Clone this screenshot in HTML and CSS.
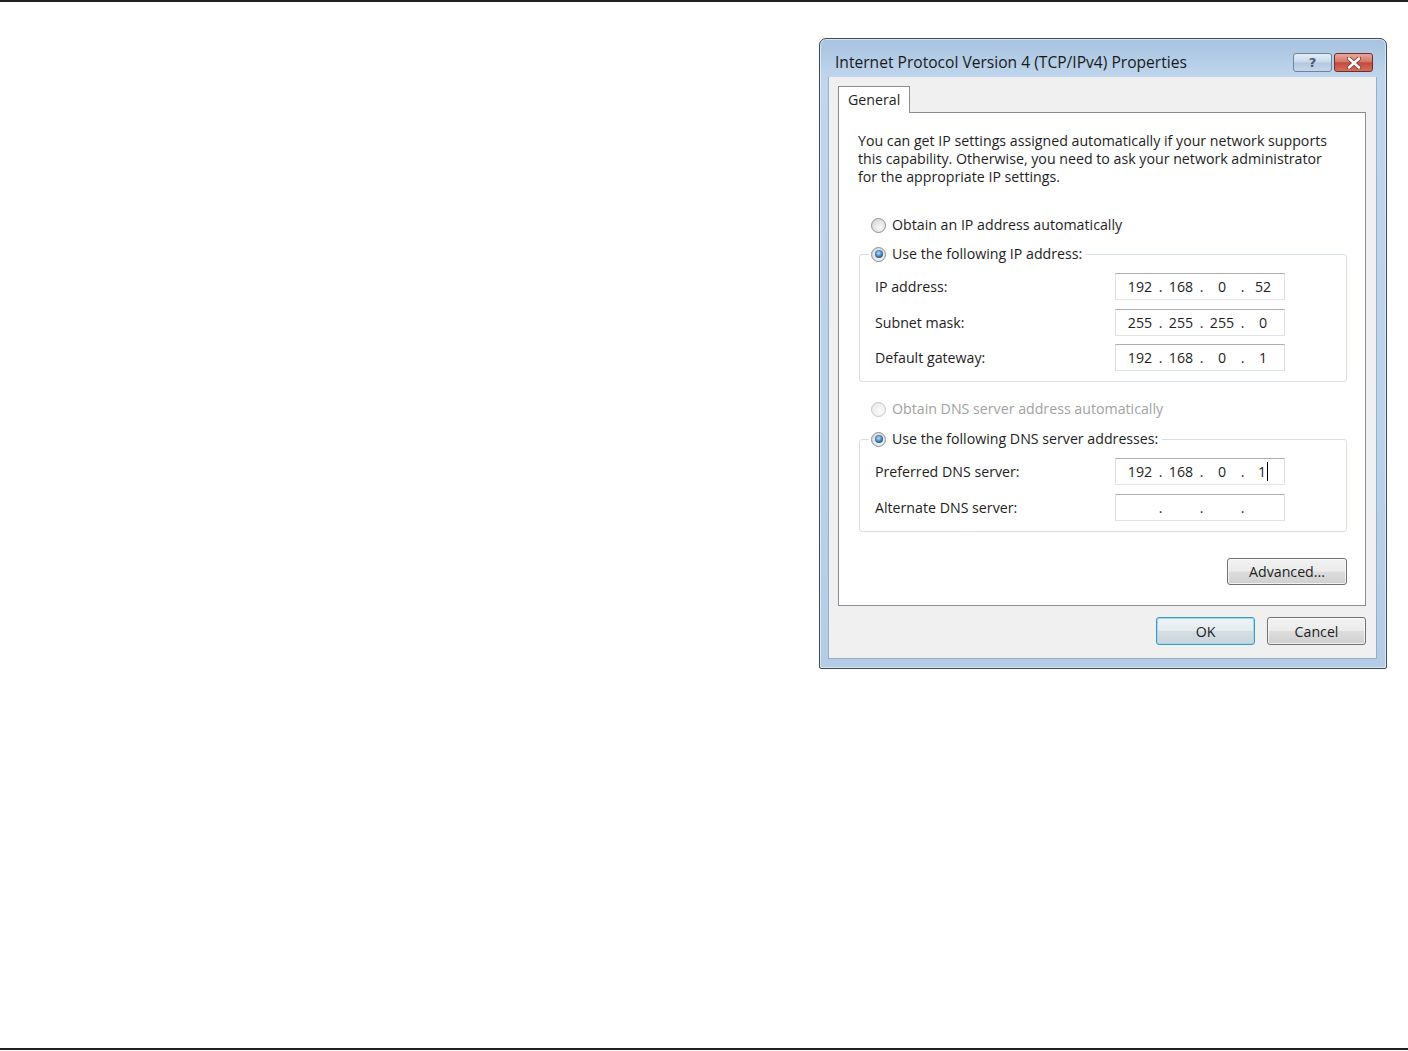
FILE: index.html
```html
<!DOCTYPE html>
<html lang="en">
<head>
    <meta charset="UTF-8">
    <title>Internet Protocol Version 4 (TCP/IPv4) Properties</title>
    <link rel="stylesheet" href="styles.css">
</head>
<body>
<div class="page">
    <div class="rule"></div>

    <div class="canvas">
        <!-- Dialog window -->
        <div class="dialog">
            <div class="titlebar">
                <span class="title">Internet Protocol Version 4 (TCP/IPv4) Properties</span>
                <div class="caption-btns">
                    <button class="cap help">?</button>
                    <button class="cap close">
                        <svg width="16" height="12" viewBox="0 0 16 12">
                            <path d="M3 1.5 L13 10.5 M13 1.5 L3 10.5" stroke="#7a3530" stroke-width="4.2" stroke-linecap="round"/>
                            <path d="M3 1.5 L13 10.5 M13 1.5 L3 10.5" stroke="#ffffff" stroke-width="2.6" stroke-linecap="round"/>
                        </svg>
                    </button>
                </div>
            </div>

            <div class="body">
                <div class="tabs"><span class="tab">General</span></div>

                <div class="panel">
                    <p class="intro">You can get IP settings assigned automatically if your network supports<br>this capability. Otherwise, you need to ask your network administrator<br>for the appropriate IP settings.</p>

                    <div class="opt first"><span class="radio"></span>Obtain an IP address automatically</div>
                    <fieldset class="group">
                        <legend><span class="opt"><span class="radio on"></span>Use the following IP address:</span></legend>
                        <div class="row">
                            <span class="lbl">IP address:</span>
                            <div class="ip"><span class="oct">192</span><span class="dot">.</span><span class="oct">168</span><span class="dot">.</span><span class="oct">0</span><span class="dot">.</span><span class="oct">52</span></div>
                        </div>
                        <div class="row">
                            <span class="lbl">Subnet mask:</span>
                            <div class="ip"><span class="oct">255</span><span class="dot">.</span><span class="oct">255</span><span class="dot">.</span><span class="oct">255</span><span class="dot">.</span><span class="oct">0</span></div>
                        </div>
                        <div class="row">
                            <span class="lbl">Default gateway:</span>
                            <div class="ip"><span class="oct">192</span><span class="dot">.</span><span class="oct">168</span><span class="dot">.</span><span class="oct">0</span><span class="dot">.</span><span class="oct">1</span></div>
                        </div>
                    </fieldset>

                    <div class="opt second disabled"><span class="radio"></span>Obtain DNS server address automatically</div>
                    <fieldset class="group dns">
                        <legend><span class="opt"><span class="radio on"></span>Use the following DNS server addresses:</span></legend>
                        <div class="row">
                            <span class="lbl">Preferred DNS server:</span>
                            <div class="ip"><span class="oct">192</span><span class="dot">.</span><span class="oct">168</span><span class="dot">.</span><span class="oct">0</span><span class="dot">.</span><span class="oct"><span class="caret">1</span></span></div>
                        </div>
                        <div class="row">
                            <span class="lbl">Alternate DNS server:</span>
                            <div class="ip"><span class="oct"></span><span class="dot">.</span><span class="oct"></span><span class="dot">.</span><span class="oct"></span><span class="dot">.</span><span class="oct"></span></div>
                        </div>
                    </fieldset>

                    <div class="adv-row"><button class="btn adv">Advanced...</button></div>
                </div>

                <div class="footer">
                    <button class="btn ok">OK</button>
                    <button class="btn">Cancel</button>
                </div>
            </div>
        </div>
    </div>

    <div class="rule bottom"></div>
</div>
</body>
</html>
```

FILE: styles.css
```css
* {
    margin: 0;
    padding: 0;
    box-sizing: border-box;
}

body {
    background: #ffffff;
    font-family: "Open Sans", "Noto Sans", sans-serif;
    font-size: 14.2px;
    color: #1e1e1e;
}

.page {
    height: 1051px;
    display: flex;
    flex-direction: column;
}

.rule {
    height: 2px;
    background: #231f20;
}

.rule.bottom {
    margin-bottom: 1px;
}

.canvas {
    flex: 1;
}

/* Window frame */
.dialog {
    width: 568px;
    height: 631px;
    margin: 36px 0 0 819px;
    border: 1px solid #3f4a55;
    border-radius: 7px 7px 2px 2px;
    background: linear-gradient(180deg, #a7c3e1 0%, #bfd5ec 6%, #bad2ea 60%, #b4cde7 100%);
    box-shadow: inset 0 0 0 1px rgba(255, 255, 255, 0.55);
    display: flex;
    flex-direction: column;
}

.titlebar {
    height: 38px;
    display: flex;
    justify-content: space-between;
    align-items: flex-start;
    padding: 0 13px 0 15px;
}

.title {
    margin-top: 13px;
    line-height: 20px;
    font-size: 15.6px;
    color: #1a1a1a;
}

.caption-btns {
    display: flex;
    gap: 2px;
    margin-top: 14px;
}

.cap {
    width: 39px;
    height: 19px;
    border-radius: 3px;
    display: flex;
    align-items: center;
    justify-content: center;
    font-family: "DejaVu Sans", sans-serif;
}

.help {
    border: 1px solid #6f839c;
    background: linear-gradient(180deg, #e4edf7 0%, #c8d8ea 48%, #b3c8df 52%, #c4d6ea 100%);
    color: #4a5a6e;
    font-size: 13px;
    font-weight: bold;
}

.close {
    border: 1px solid #6e2f2a;
    background: linear-gradient(180deg, #e9a89c 0%, #d6776a 45%, #c24b3c 52%, #d4705f 100%);
}

/* Client area */
.body {
    flex: 1;
    margin: 0 9px 9px 8px;
    background: #f0f0f0;
    border: 1px solid #97aec6;
    border-top: none;
    padding: 9px 10px 0 9px;
}

.tabs {
    display: flex;
}

.tab {
    position: relative;
    z-index: 1;
    height: 27px;
    margin-bottom: -1px;
    padding: 3px 9px 0 9px;
    border: 1px solid #898c95;
    border-bottom: none;
    background: #ffffff;
    line-height: 20px;
}

.panel {
    height: 494px;
    border: 1px solid #898c95;
    background: #ffffff;
    padding: 19px 17px 0 19px;
}

.intro {
    line-height: 18px;
}

.opt {
    display: flex;
    align-items: center;
    gap: 6px;
    line-height: 18px;
}

.opt.first {
    margin: 30px 0 0 13px;
}

.opt.second {
    margin: 18px 0 0 13px;
}

.opt.disabled {
    color: #a2a2a2;
}

.radio {
    width: 15px;
    height: 15px;
    border-radius: 50%;
    border: 1px solid #8c8f94;
    background: radial-gradient(circle at 60% 65%, #f8f8f8 0%, #dcdcdc 70%, #c8c8c8 100%);
    display: flex;
    align-items: center;
    justify-content: center;
}

.disabled .radio {
    border-color: #c4c6c9;
    background: radial-gradient(circle at 60% 65%, #fafafa 0%, #e6e6e6 100%);
}

.radio.on::after {
    content: "";
    width: 8px;
    height: 8px;
    border-radius: 50%;
    background: radial-gradient(circle at 45% 40%, #cbe6fa 0%, #5d9bd0 35%, #1f4f7c 75%, #163c60 100%);
}

/* Group boxes */
.group {
    width: 488px;
    margin: 11px 0 0 1px;
    border: 1px solid #d5dfe5;
    border-radius: 3px;
    padding: 10px 0 10px 15px;
}

.group.dns {
    margin-top: 12px;
    padding-top: 10px;
}

.group legend {
    margin-left: -6px;
    padding: 0 4px 0 2px;
}

.row {
    display: flex;
    align-items: center;
    height: 27px;
}

.row + .row {
    margin-top: 8.5px;
}

.lbl {
    width: 240px;
}

.ip {
    width: 170px;
    height: 27px;
    border: 1px solid #dfe3e8;
    border-top-color: #abadb3;
    display: flex;
    align-items: center;
    padding-left: 9px;
}

.oct {
    width: 30px;
    text-align: center;
}

.dot {
    width: 11px;
    text-align: center;
}

.caret {
    border-right: 1px solid #000000;
    padding-right: 1px;
}

/* Buttons */
.btn {
    height: 27px;
    font-family: inherit;
    font-size: 14.2px;
    color: #1e1e1e;
    border: 1px solid #707070;
    border-radius: 3px;
    background: linear-gradient(180deg, #f2f2f2 0%, #ebebeb 48%, #dddddd 52%, #cfcfcf 100%);
    box-shadow: inset 0 0 0 1px rgba(255, 255, 255, 0.7);
}

.adv-row {
    display: flex;
    justify-content: flex-end;
    width: 489px;
    margin-top: 26px;
}

.adv {
    width: 120px;
}

.footer {
    display: flex;
    justify-content: flex-end;
    gap: 12px;
    padding-top: 11px;
}

.footer .btn {
    width: 99px;
    height: 28px;
}

.btn.ok {
    border-color: #3c9ac2;
    box-shadow: inset 0 0 0 1px #9fd8f0;
    background: linear-gradient(180deg, #eef3f6 0%, #e4ecf0 48%, #d4dde2 52%, #cad6dc 100%);
}
```
